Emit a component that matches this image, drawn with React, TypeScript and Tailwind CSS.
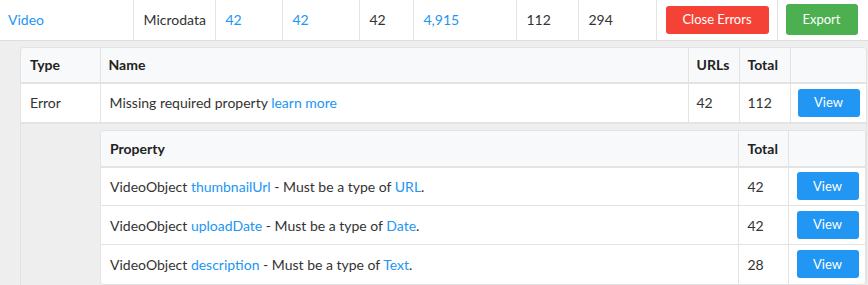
import React from "react";

const link = "text-[#2196f3]";

function ViewBtn() {
  return (
    <button className="h-[28px] w-[62px] rounded-[3px] bg-[#2196f3] text-[13px] text-white">
      View
    </button>
  );
}

export default function App() {
  return (
    <div
      className="w-[868px] h-[285px] overflow-hidden bg-[#eeeeee] text-[#333] text-[14px]"
      style={{ fontFamily: "Lato, 'Open Sans', sans-serif" }}
    >
      <table className="w-full table-fixed border-collapse bg-white border-b border-[#dddddd]">
        <colgroup>
          <col className="w-[133px]" />
          <col className="w-[82px]" />
          <col className="w-[67px]" />
          <col className="w-[77px]" />
          <col className="w-[54px]" />
          <col className="w-[103px]" />
          <col className="w-[62px]" />
          <col className="w-[78px]" />
          <col className="w-[121px]" />
          <col />
        </colgroup>
        <tbody>
          <tr className="h-[40px]">
            <td className={`pl-[8px] ${link}`}>Video</td>
            <td className="pl-[10px] border-l border-[#e3e3e3]">Microdata</td>
            <td className={`pl-[10px] border-l border-[#e3e3e3] ${link}`}>42</td>
            <td className={`pl-[10px] border-l border-[#e3e3e3] ${link}`}>42</td>
            <td className="pl-[10px] border-l border-[#e3e3e3]">42</td>
            <td className={`pl-[10px] border-l border-[#e3e3e3] ${link}`}>4,915</td>
            <td className="pl-[10px] border-l border-[#e3e3e3]">112</td>
            <td className="pl-[10px] border-l border-[#e3e3e3]">294</td>
            <td className="pl-[9px] border-l border-[#e3e3e3]">
              <button className="h-[28px] w-[103px] rounded-[3px] bg-[#f44336] text-[13px] text-white">
                Close Errors
              </button>
            </td>
            <td className="pl-[8px] border-l border-[#e3e3e3]">
              <button className="h-[31px] w-[72px] rounded-[3px] bg-[#4caf50] text-[13px] text-white">
                Export
              </button>
            </td>
          </tr>
        </tbody>
      </table>

      <div className="pl-[20px] pr-[1px] pt-[6px]">
        <div className="rounded-t-[4px] border border-[#e3e3e3] overflow-hidden">
          <table className="w-full table-fixed border-collapse">
            <colgroup>
              <col className="w-[79px]" />
              <col className="w-[588px]" />
              <col className="w-[51px]" />
              <col className="w-[51px]" />
              <col />
            </colgroup>
            <thead>
              <tr className="h-[35px] bg-[#f8f9fa] font-bold text-[#222]">
                <th className="text-left pl-[9px] border-b-2 border-[#e3e3e3]">Type</th>
                <th className="text-left pl-[8px] border-b-2 border-l border-[#e3e3e3]">Name</th>
                <th className="text-left pl-[8px] border-b-2 border-l border-[#e3e3e3]">URLs</th>
                <th className="text-left pl-[8px] border-b-2 border-l border-[#e3e3e3]">Total</th>
                <th className="border-b-2 border-l border-[#e3e3e3]"></th>
              </tr>
            </thead>
            <tbody>
              <tr className="h-[40px] bg-white">
                <td className="pl-[9px] border-b-2 border-[#e3e3e3]">Error</td>
                <td className="pl-[9px] border-b-2 border-l border-[#e3e3e3]">
                  Missing required property <span className={link}>learn more</span>
                </td>
                <td className="pl-[8px] border-b-2 border-l border-[#e3e3e3]">42</td>
                <td className="pl-[8px] border-b-2 border-l border-[#e3e3e3]">112</td>
                <td className="pl-[7px] border-b-2 border-l border-[#e3e3e3]">
                  <ViewBtn />
                </td>
              </tr>
              <tr className="bg-[#eeeeee]">
                <td></td>
                <td colSpan={4} className="pt-[6px]">
                  <div className="rounded-[4px] border border-[#e3e3e3] overflow-hidden bg-white">
                    <table className="w-full table-fixed border-collapse">
                      <colgroup>
                        <col className="w-[637px]" />
                        <col className="w-[50px]" />
                        <col />
                      </colgroup>
                      <thead>
                        <tr className="h-[36px] bg-[#f8f9fa] font-bold text-[#222]">
                          <th className="text-left pl-[9px] border-b-2 border-[#e3e3e3]">Property</th>
                          <th className="text-left pl-[9px] border-b-2 border-l border-[#e3e3e3]">Total</th>
                          <th className="border-b-2 border-l border-[#e3e3e3]"></th>
                        </tr>
                      </thead>
                      <tbody>
                        {[
                          ["thumbnailUrl", "URL", "42"],
                          ["uploadDate", "Date", "42"],
                          ["description", "Text", "28"],
                        ].map(([p, t, n], i) => (
                          <tr key={p} className="h-[39px]">
                            <td className={`pl-[9px] ${i < 2 ? "border-b" : ""} border-[#e3e3e3]`}>
                              VideoObject <span className={link}>{p}</span> - Must be a type of{" "}
                              <span className={link}>{t}</span>.
                            </td>
                            <td className={`pl-[9px] border-l ${i < 2 ? "border-b" : ""} border-[#e3e3e3]`}>{n}</td>
                            <td className={`pl-[8px] border-l ${i < 2 ? "border-b" : ""} border-[#e3e3e3]`}>
                              <ViewBtn />
                            </td>
                          </tr>
                        ))}
                      </tbody>
                    </table>
                  </div>
                </td>
              </tr>
            </tbody>
          </table>
        </div>
      </div>
    </div>
  );
}
